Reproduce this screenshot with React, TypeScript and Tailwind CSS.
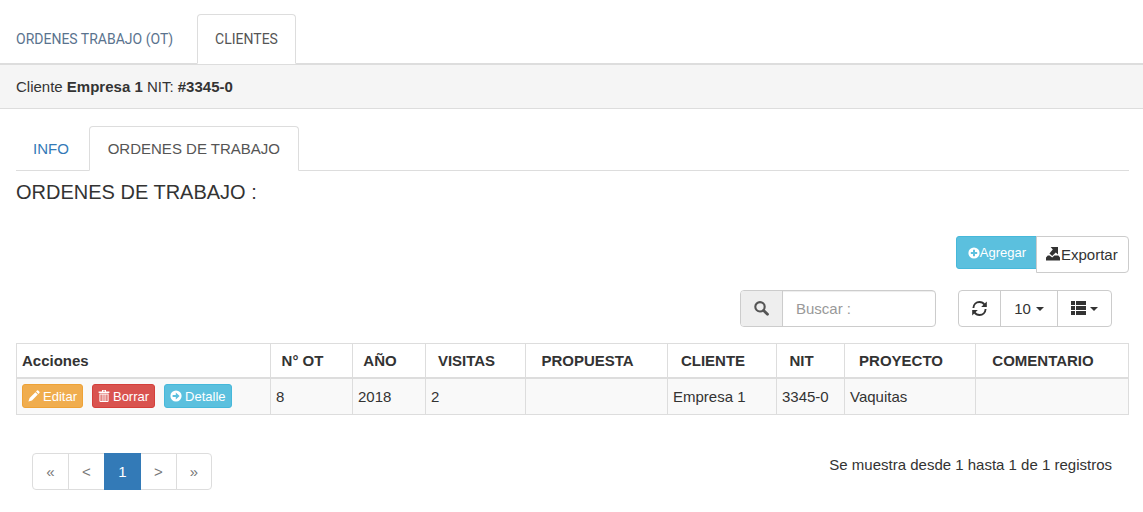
import type { ReactNode } from "react";

const iconClass = "fill-current shrink-0";

function SearchIcon() {
    return (
        <svg viewBox="0 0 15 15" className={`${iconClass} w-[15px] h-[15px]`} aria-hidden="true">
            <circle cx="6" cy="5.8" r="4.7" fill="none" stroke="currentColor" strokeWidth="2.1" />
            <path d="M9.6 9.4 L13.5 13.3" stroke="currentColor" strokeWidth="2.8" strokeLinecap="round" />
        </svg>
    );
}

function RefreshIcon() {
    return (
        <svg viewBox="0 0 15 15" className={`${iconClass} w-[15px] h-[15px]`} aria-hidden="true">
            <path d="M1.4 7 C1.6 3.4 4.2 1 7.4 1 C9.6 1 11.4 2 12.6 3.8" fill="none" stroke="currentColor" strokeWidth="1.9" />
            <path d="M13.6 8 C13.4 11.6 10.8 14 7.6 14 C5.4 14 3.6 13 2.4 11.2" fill="none" stroke="currentColor" strokeWidth="1.9" />
            <path d="M14.8 0.6 V6 H9.2 Z" />
            <path d="M0.2 14.4 V9 H5.8 Z" />
        </svg>
    );
}

function ListIcon() {
    return (
        <svg viewBox="0 0 15 15" className={`${iconClass} w-[15px] h-[15px]`} aria-hidden="true">
            <path d="M0 0 H4 V4 H0 Z M5 0 H15 V4 H5 Z M0 5 H4 V9 H0 Z M5 5 H15 V9 H5 Z M0 10 H4 V14 H0 Z M5 10 H15 V14 H5 Z" />
        </svg>
    );
}

function ExportIcon() {
    return (
        <svg viewBox="0 0 15 15" className={`${iconClass} w-[15px] h-[15px]`} aria-hidden="true">
            <path d="M4.6 0 H12 V7.4 L9.8 5.6 L6.2 9 L3.4 6.4 L6.8 2.6 Z" />
            <path d="M1.8 8.6 H3.6 L6.2 10.6 L8.4 8.6 H12.4 L14 10.6 V13.6 H0 V10.6 Z" />
        </svg>
    );
}

function PlusIcon() {
    return (
        <svg viewBox="0 0 12 12" className={`${iconClass} w-3 h-3`} aria-hidden="true">
            <path fillRule="evenodd" d="M6 0.4 A5.6 5.6 0 1 1 6 11.6 A5.6 5.6 0 1 1 6 0.4 Z M5 2.8 V5 H2.8 V7 H5 V9.2 H7 V7 H9.2 V5 H7 V2.8 Z" />
        </svg>
    );
}

function PencilIcon() {
    return (
        <svg viewBox="0 0 12 12" className={`${iconClass} w-3 h-3`} aria-hidden="true">
            <path d="M9 0.6 Q9.6 0 10.2 0.6 L11.4 1.8 Q12 2.4 11.4 3 L10.4 4 L8 1.6 Z M7.4 2.2 L9.8 4.6 L4 10.4 L0.4 11.6 L1.6 8 Z" />
        </svg>
    );
}

function TrashIcon() {
    return (
        <svg viewBox="0 0 12 12" className={`${iconClass} w-3 h-3`} aria-hidden="true">
            <path fillRule="evenodd" d="M4 0 H8 V1.4 H11.4 V3 H0.6 V1.4 H4 Z M5 0.8 V1.4 H7 V0.8 Z" />
            <path fillRule="evenodd" d="M1.4 3.6 H10.6 V11 Q10.6 12 9.6 12 H2.4 Q1.4 12 1.4 11 Z M2.5 4.4 V11 H3.7 V4.4 Z M4.6 4.4 V11 H5.5 V4.4 Z M6.5 4.4 V11 H7.4 V4.4 Z M8.3 4.4 V11 H9.5 V4.4 Z" />
        </svg>
    );
}

function ArrowIcon() {
    return (
        <svg viewBox="0 0 12 12" className={`${iconClass} w-3 h-3`} aria-hidden="true">
            <path fillRule="evenodd" d="M6 0.4 A5.6 5.6 0 1 1 6 11.6 A5.6 5.6 0 1 1 6 0.4 Z M5.8 2.4 V4.9 H2.6 V7.1 H5.8 V9.6 L9.6 6 Z" />
        </svg>
    );
}

function Caret() {
    return <span className="border-x-4 border-t-4 border-x-transparent border-t-[#333]" />;
}

const columns = [
    { title: "N° OT", value: "8", width: "w-[82px]" },
    { title: "AÑO", value: "2018", width: "w-[73px]" },
    { title: "VISITAS", value: "2", width: "w-[100px]" },
    { title: "PROPUESTA", value: "", width: "w-[142px]" },
    { title: "CLIENTE", value: "Empresa 1", width: "w-[109px]" },
    { title: "NIT", value: "3345-0", width: "w-[68px]" },
    { title: "PROYECTO", value: "Vaquitas", width: "w-[131px]" },
    { title: "COMENTARIO", value: "", width: "w-[153px]" },
];

const pages = ["«", "<", "1", ">", "»"];

function RowButton({ className, children }: { className: string; children: ReactNode }) {
    return (
        <button type="button" className={`flex items-center gap-[3px] h-6 px-[5px] border rounded-[3px] text-[13px] text-white ${className}`}>
            {children}
        </button>
    );
}

export default function App() {
    return (
        <div className="bg-white text-[#333] text-[15px] leading-[21px] font-['Liberation_Sans',Arial,sans-serif]">
            <nav className="flex items-end gap-[3px] pt-[14px] border-b border-[#ddd] font-[Roboto,sans-serif] text-sm">
                <a href="#ot" className="h-[49px] min-w-[194px] flex items-center px-4 text-[#5a738e]">ORDENES TRABAJO (OT)</a>
                <a href="#clientes" aria-current="page"
                    className="h-[50px] min-w-[99px] -mb-px flex items-center justify-center px-4 border border-[#ddd] border-b-white rounded-t bg-white text-[#555]">
                    CLIENTES
                </a>
            </nav>

            <div className="px-4 py-[11px] bg-[#f5f5f5] border-y border-[#ddd]">
                Cliente <b>Empresa 1</b> NIT: <b>#3345-0</b>
            </div>

            <main className="px-4 pt-[17px] pr-[14px]">
                <nav className="flex items-end gap-[3px] border-b border-[#ddd]">
                    <a href="#info" className="h-[44px] flex items-center px-[17px] text-[#337ab7]">INFO</a>
                    <a href="#ordenes" aria-current="page"
                        className="h-[45px] min-w-[210px] -mb-px flex items-center justify-center px-4 border border-[#ddd] border-b-white rounded-t bg-white text-[#555]">
                        ORDENES DE TRABAJO
                    </a>
                </nav>

                <h4 className="mt-[11px] text-[20px] leading-[21px]">ORDENES DE TRABAJO :</h4>

                <div className="mt-[33px] flex justify-end items-start">
                    <button type="button" className="flex items-center h-[33px] pl-[11px] pr-[10px] bg-[#5bc0de] border border-[#46b8da] rounded-l-[3px] text-[13px] text-white">
                        <PlusIcon />Agregar
                    </button>
                    <button type="button" className="flex items-center h-[37px] min-w-[93px] -ml-px px-[9px] bg-white border border-[#ccc] rounded-r">
                        <ExportIcon />Exportar
                    </button>
                </div>

                <div className="mt-[17px] mr-[17px] flex justify-end gap-[22px]">
                    <div className="flex h-[37px] w-[196px] border border-[#ccc] rounded overflow-hidden">
                        <label htmlFor="buscar" className="w-[42px] shrink-0 flex items-center justify-center bg-[#eee] border-r border-[#ccc] text-[#555]">
                            <SearchIcon />
                        </label>
                        <input id="buscar" type="text" placeholder="Buscar :" aria-label="Buscar"
                            className="min-w-0 flex-1 px-[13px] shadow-[inset_0_1px_1px_rgba(0,0,0,0.075)] outline-none placeholder:text-[#999]" />
                    </div>
                    <div className="flex h-[37px] border border-[#ccc] rounded">
                        <button type="button" aria-label="Refrescar" className="w-[42px] flex items-center justify-center border-r border-[#ccc]">
                            <RefreshIcon />
                        </button>
                        <button type="button" className="w-[57px] flex items-center justify-center gap-[5px] border-r border-[#ccc]">
                            10 <Caret />
                        </button>
                        <button type="button" aria-label="Columnas" className="w-[53px] flex items-center justify-center gap-1">
                            <ListIcon /><Caret />
                        </button>
                    </div>
                </div>

                <table className="mt-4 w-full table-fixed border-collapse border border-[#ddd]">
                    <thead>
                        <tr className="h-[34px]">
                            <th className="w-[254px] px-[5px] text-left border border-[#ddd] border-b-2">Acciones</th>
                            {columns.map((col) => (
                                <th key={col.title} className={`${col.width} pl-[5px] pr-[23px] text-center whitespace-nowrap border border-[#ddd] border-b-2`}>
                                    {col.title}
                                </th>
                            ))}
                        </tr>
                    </thead>
                    <tbody>
                        <tr className="h-[37px] bg-[#f9f9f9]">
                            <td className="px-[5px] border border-[#ddd]">
                                <div className="flex gap-[9px]">
                                    <RowButton className="bg-[#f0ad4e] border-[#eea236]"><PencilIcon />Editar</RowButton>
                                    <RowButton className="bg-[#d9534f] border-[#d43f3a]"><TrashIcon />Borrar</RowButton>
                                    <RowButton className="bg-[#5bc0de] border-[#46b8da]"><ArrowIcon />Detalle</RowButton>
                                </div>
                            </td>
                            {columns.map((col) => (
                                <td key={col.title} className="px-[5px] whitespace-nowrap border border-[#ddd]">{col.value}</td>
                            ))}
                        </tr>
                    </tbody>
                </table>

                <div className="mt-[38px] ml-4 mr-[17px] flex justify-between items-start">
                    <nav aria-label="Paginación" className="flex">
                        {pages.map((page) => (
                            <a key={page} href="#pagina" aria-current={page === "1" ? "page" : undefined}
                                className={`w-[37px] h-[37px] -mr-px flex items-center justify-center border first:rounded-l last:rounded-r last:w-9 ${page === "1" ? "z-10 bg-[#337ab7] border-[#337ab7] text-white" : "bg-white border-[#ddd] text-[#777]"}`}>
                                {page}
                            </a>
                        ))}
                    </nav>
                    <p className="mt-px">Se muestra desde 1 hasta 1 de 1 registros</p>
                </div>
            </main>
        </div>
    );
}
